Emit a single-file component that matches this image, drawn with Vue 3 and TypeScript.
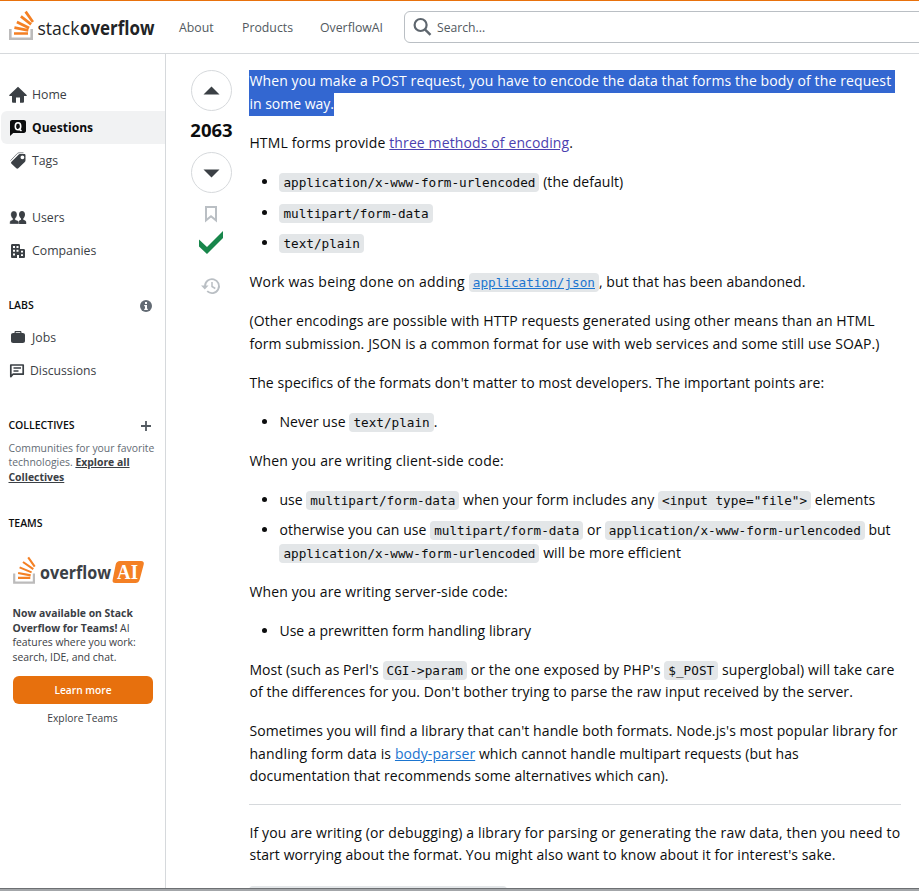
<script setup lang="ts">
type Kind = 'code' | 'link' | 'visited' | 'codelink' | 'selected'
interface Seg { t: string; ls: number; k?: Kind }
type Line = Seg[]
interface Block { type: 'p' | 'ul' | 'hr'; items?: Line[][] }

// s: text run with its tracking in px; c: inline code
const s = (t: string, ls = 0, k?: Kind): Seg => ({ t, ls, k })
const c = (t: string): Seg => ({ t, ls: 0, k: 'code' })

const blocks: Block[] = [
  { type: 'p', items: [[
    [s('When you make a POST request, you have to encode the data that forms the body of the request ', 0.122, 'selected')],
    [s('in some way.', 0, 'selected')],
  ]] },
  { type: 'p', items: [[[s('HTML forms provide ', 0.15), s('three methods of encoding', 0.12, 'visited'), s('.')]]] },
  { type: 'ul', items: [
    [[c('application/x-www-form-urlencoded'), s(' (the default)', 0.06)]],
    [[c('multipart/form-data')]],
    [[c('text/plain')]],
  ] },
  { type: 'p', items: [[[s('Work was being done on adding ', 0.22), s('application/json', 0, 'codelink'), s(', but that has been abandoned.', 0.06)]]] },
  { type: 'p', items: [[
    [s('(Other encodings are possible with HTTP requests generated using other means than an HTML', 0.108)],
    [s('form submission. JSON is a common format for use with web services and some still use SOAP.)', 0.104)],
  ]] },
  { type: 'p', items: [[[s("The specifics of the formats don't matter to most developers. The important points are:", 0.08)]]] },
  { type: 'ul', items: [[[s('Never use ', 0.06), c('text/plain'), s('.')]]] },
  { type: 'p', items: [[[s('When you are writing client-side code:', 0.17)]]] },
  { type: 'ul', items: [
    [[s('use '), c('multipart/form-data'), s(' when your form includes any ', 0.07), c('<input type="file">'), s(' elements')]],
    [
      [s('otherwise you can use ', 0.07), c('multipart/form-data'), s(' or '), c('application/x-www-form-urlencoded'), s(' but')],
      [c('application/x-www-form-urlencoded'), s(' will be more efficient', 0.07)],
    ],
  ] },
  { type: 'p', items: [[[s('When you are writing server-side code:', 0.13)]]] },
  { type: 'ul', items: [[[s('Use a prewritten form handling library', 0.05)]]] },
  { type: 'p', items: [[
    [s("Most (such as Perl's ", 0.07), c('CGI->param'), s(" or the one exposed by PHP's ", 0.13), c('$_POST'), s(' superglobal) will take care', 0.12)],
    [s("of the differences for you. Don't bother trying to parse the raw input received by the server.", 0.084)],
  ]] },
  { type: 'p', items: [[
    [s("Sometimes you will find a library that can't handle both formats. Node.js's most popular library for", 0.082)],
    [s('handling form data is ', 0.14), s('body-parser', 0.08, 'link'), s(' which cannot handle multipart requests (but has', 0.06)],
    [s('documentation that recommends some alternatives which can).', 0.055)],
  ]] },
  { type: 'hr' },
  { type: 'p', items: [[
    [s('If you are writing (or debugging) a library for parsing or generating the raw data, then you need to', 0.156)],
    [s("start worrying about the format. You might also want to know about it for interest's sake.", 0.08)],
  ]] },
]
</script>

<template>
  <div class="page">
    <header class="topbar">
      <svg class="logo" width="148" height="34" viewBox="0 0 148 34">
        <path d="M1.3 19v9.700h21.400V19" fill="none" stroke="#bcbbbb" stroke-width="2.600" />
        <path d="M5 23.500h14M5.400 17.600l13.900 2.800M7.900 12l12.200 6M11.900 6.400l10.200 8M16.600 1.600l7.300 10.400" stroke="#f48024" stroke-width="2.700" />
        <text class="wm light" x="28.500" y="25" textLength="42" lengthAdjust="spacingAndGlyphs">stack</text>
        <text class="wm heavy" transform="translate(71 25) scale(.89 1)" textLength="83.700" lengthAdjust="spacingAndGlyphs">overflow</text>
      </svg>
      <nav class="topnav">
        <a class="n1">About</a><a class="n2">Products</a><a class="n3">OverflowAI</a>
      </nav>
      <div class="search">
        <svg width="20" height="20" viewBox="0 0 20 20"><circle cx="7.600" cy="8" r="6" fill="none" stroke="#5e666e" stroke-width="2.200" /><path d="M11.900 12.300l5.600 5.600" stroke="#5e666e" stroke-width="2.400" /></svg>
        <span>Search...</span>
      </div>
    </header>

    <div class="body">
      <aside class="side">
        <div class="item">
          <svg width="18" height="18" viewBox="0 0 18 18"><path d="M9 .8l8.700 8.300v.8H15v5.600c0 .8-.5 1.300-1.300 1.300H11v-5.400H7v5.400H4.300c-.8 0-1.300-.5-1.300-1.300V9.900H.3v-.8z" fill="#3b4045" /></svg>
          <span>Home</span>
        </div>
        <div class="item active">
          <svg width="18" height="18" viewBox="0 0 18 18"><path d="M1 3.200C1 1.900 1.900 1 3.200 1h11.600C16.100 1 17 1.900 17 3.200v8.600c0 1.300-.9 2.200-2.200 2.200H4.200L1 17z" fill="#0c0d0e" /><path d="M11.700 7.200c0 2.300-1.100 3.600-2.700 3.600S6.300 9.500 6.300 7.200 7.400 3.700 9 3.700s2.700 1.200 2.700 3.500zM9.700 9.800l2.800 2" fill="none" stroke="#fff" stroke-width="1.600" /></svg>
          <span>Questions</span>
        </div>
        <div class="item">
          <svg width="18" height="18" viewBox="0 0 18 18"><path d="M10.800 2H15.200c.8 0 1.300.5 1.300 1.300v5c0 .7-.2 1.200-.7 1.700l-6.500 6.300c-.6.6-1.400.6-2 0L2.500 11.700c-.6-.6-.6-1.400 0-2l7-7c.4-.5.8-.7 1.300-.7zm2.600 5.200a1.900 1.900 0 1 0 0-3.800 1.900 1.900 0 0 0 0 3.800z" fill="#3b4045" fill-rule="evenodd" /><path d="M1.500 8.600L8.300 1.500C8.800 1 9.300.8 10 .8h4.500" fill="none" stroke="#85898d" stroke-width="1" /></svg>
          <span>Tags</span>
        </div>
        <div class="item gap">
          <svg width="18" height="18" viewBox="0 0 18 18"><path d="M9.500 15V13c0-1 .8-1.500 2.500-2.300V9.500C11 8.700 10 7.200 10 5.600 10 3.300 11.200 2 13 2s3 1.300 3 3.600c0 1.600-.7 3.100-1.700 3.900v1.200c2 .8 2.900 1.300 2.900 2.300v2z" fill="#3b4045" /><path d="M.8 15v-2c0-1 .9-1.500 2.900-2.300V9.500C2.600 8.700 1.800 7.200 1.800 5.600 1.800 3.300 3 2 4.900 2s3.100 1.300 3.100 3.600c0 1.600-.7 3.100-1.800 3.900v1.200c2.100.8 3.600 1.300 3.600 2.300v2z" fill="#3b4045" stroke="#fff" stroke-width=".3" /></svg>
          <span>Users</span>
        </div>
        <div class="item">
          <svg width="18" height="18" viewBox="0 0 18 18"><path d="M3.500 2h6C10.500 2 11 2.500 11 3.500V7h3.500c1 0 1.500.5 1.500 1.500v6c0 1-.5 1.500-1.500 1.500H10v-3H8v3H3.500C2.500 16 2 15.500 2 14.500v-11C2 2.500 2.500 2 3.500 2zM4 4v2h2V4zm3.500 0v2h2V4zM4 7.800v2h2v-2zm3.500 0v2h2v-2zM4 11.600v2h2v-2zm8-2.800v1.700h2V8.800zm0 3.500V14h2v-1.700z" fill="#3b4045" fill-rule="evenodd" /></svg>
          <span>Companies</span>
        </div>

        <div class="head labs"><span>LABS</span>
          <svg width="12" height="12" viewBox="0 0 12 12"><circle cx="6" cy="6" r="6" fill="#636b74" /><path d="M5 2h2v2H5zM4.200 5H7v3.800h.8V10H4.200V8.800H5V6.200h-.8z" fill="#fff" /></svg>
        </div>
        <div class="item after">
          <svg width="18" height="18" viewBox="0 0 18 18"><path d="M5.500 4V3.300C5.500 2.500 6 2 6.800 2h4.400c.8 0 1.300.5 1.300 1.300V4h1.300C15.200 4 16 4.800 16 6.200v5.600c0 1.400-.8 2.200-2.200 2.200H4.200C2.800 14 2 13.200 2 11.800V6.200C2 4.800 2.800 4 4.200 4zm1.200 0h4.600v-.8H6.700z" fill="#3b4045" fill-rule="evenodd" /></svg>
          <span>Jobs</span>
        </div>
        <div class="item disc">
          <svg width="18" height="18" viewBox="0 0 18 18"><path d="M1.800 3h12.400v9.200H4L1.800 14.600z" fill="none" stroke="#3b4045" stroke-width="1.700" stroke-linejoin="round" /><path d="M4.500 6h7.500M4.500 9h5" stroke="#3b4045" stroke-width="1.500" /></svg>
          <span>Discussions</span>
        </div>

        <div class="head coll"><span>COLLECTIVES</span>
          <svg width="12" height="12" viewBox="0 0 12 12"><path d="M6 1v10M1 6h10" stroke="#525960" stroke-width="1.800" /></svg>
        </div>
        <p class="blurb">Communities for your favorite<br><i>technologies.</i> <b>Explore all</b><br><b>Collectives</b></p>

        <div class="head teams"><span>TEAMS</span></div>
        <svg class="ailogo" width="132" height="30" viewBox="0 0 132 30">
          <path d="M1.200 17.500v9.200h19.700v-9.200" fill="none" stroke="#bcbbbb" stroke-width="2.200" />
          <path d="M5 21.900h12.300M5.100 17l12.600 2.400M6.600 11.400l12 5M10 6l10.300 7.200M15.200 1.300l6.500 9.400" stroke="#f48024" stroke-width="2.100" />
          <text class="aiword" transform="translate(27 22.800) scale(.92 1)" textLength="77.200" lengthAdjust="spacingAndGlyphs">overflow</text>
          <path d="M107 5h21c2.300 0 3.300 1.400 2.700 3.600l-4 14.800c-.7 2.300-2 3.600-4.300 3.600h-20c-2.300 0-3.300-1.400-2.700-3.600l3-14.800C103.300 6.300 104.700 5 107 5z" fill="#f48024" />
          <text class="aiai" x="104" y="22.700" textLength="21" lengthAdjust="spacingAndGlyphs">AI</text>
        </svg>
        <p class="promo"><b>Now available on Stack</b><br><b>Overflow for Teams!</b> AI<br>features where you work:<br>search, IDE, and chat.</p>
        <button class="learn">Learn more</button>
        <a class="explore">Explore Teams</a>
      </aside>

      <main class="main">
        <div class="votes">
          <div class="circle"><svg width="18" height="18" viewBox="0 0 18 18"><path d="M.5 12.500h16l-8-8z" fill="#3b4045" /></svg></div>
          <div class="score">2063</div>
          <div class="circle"><svg width="18" height="18" viewBox="0 0 18 18"><path d="M.5 5.500h16l-8 8z" fill="#3b4045" /></svg></div>
          <svg class="mark" width="14" height="18" viewBox="0 0 14 18"><path d="M2 2h10v13.300l-5-4-5 4z" fill="none" stroke="#babfc4" stroke-width="2" /></svg>
          <svg class="check" width="26" height="26" viewBox="0 0 26 26"><path d="M1 9.500l8 7.500L25 1v7L9 24 1 16.500z" fill="#18864b" /></svg>
          <svg class="hist" width="20" height="18" viewBox="0 0 20 18"><path d="M4 9a7 7 0 1 1 2.200 5.200" fill="none" stroke="#babfc4" stroke-width="1.800" /><path d="M0 8.500h7.500L3.800 12.500z" fill="#babfc4" /><path d="M11 5v4.500l3.300 2" fill="none" stroke="#babfc4" stroke-width="1.500" /></svg>
        </div>
        <article class="prose">
          <template v-for="(b, bi) in blocks" :key="bi">
            <hr v-if="b.type === 'hr'">
            <component :is="b.type" v-else>
              <component :is="b.type === 'ul' ? 'li' : 'span'" v-for="(item, ii) in b.items" :key="ii" class="entry">
                <span v-for="(line, li) in item" :key="li" class="line"><span v-for="(g, gi) in line" :key="gi" :class="g.k" :style="{ letterSpacing: g.ls + 'px' }">{{ g.t }}</span></span>
              </component>
            </component>
          </template>
          <div class="pre"></div>
        </article>
      </main>
    </div>
    <div class="bottom"></div>
  </div>
</template>

<style>
body { margin: 0; overflow: hidden; background: #fff; }
</style>

<style scoped>
* { box-sizing: border-box; }
.page { width: 919px; height: 891px; overflow: hidden; display: flex; flex-direction: column; font-family: "Open Sans", "Noto Sans", sans-serif; color: #0c0d0e; background: #fff; }
.topbar { height: 54px; flex: none; border-top: 1px solid #e8710c; border-bottom: 1px solid #d6d9dc; display: flex; }
.logo { margin: 9px 0 0 9px; flex: none; display: block; }
.wm { font-size: 19px; fill: #222426; }
.light { font-weight: 400; }
.heavy { font-weight: 700; }
.topnav { display: flex; width: 247px; flex: none; padding-left: 22px; font-size: 12.300px; color: #525960; line-height: 53px; }
.n1 { width: 63px; }
.n2 { width: 78px; }
.search { margin: 10px -10px 0 0; height: 32px; flex: 1; border: 1px solid #babfc4; border-radius: 6px; display: flex; align-items: center; padding-left: 8px; gap: 4px; font-size: 12.200px; color: #525960; }
.body { display: flex; flex: 1; min-height: 0; }
.side { width: 166px; flex: none; border-right: 1px solid #d6d9dc; padding-top: 24px; }
.item { height: 33px; display: flex; align-items: center; padding-left: 9px; gap: 5px; font-size: 12.300px; color: #3b4045; }
.item.active { background: #f1f2f3; margin-left: 1px; padding-left: 8px; border-radius: 6px 0 0 6px; color: #0c0d0e; font-weight: 700; font-size: 12.100px; }
.item.gap { margin-top: 24px; }
.item.disc { gap: 3px; font-size: 12.200px; }
.head { display: flex; justify-content: space-between; align-items: center; font-size: 10.500px; font-weight: 600; padding: 0 13px 0 8.400px; height: 16px; color: #0c0d0e; }
.head svg { position: relative; top: 1px; }
.labs { margin-top: 30px; }
.after { margin-top: 8px; }
.coll { margin-top: 30.400px; }
.blurb { margin: 7.200px 0 0 8.500px; font-size: 10.400px; line-height: 14.500px; color: #636b74; white-space: nowrap; }
.blurb i { font-style: normal; }
.blurb b { color: #3b4045; text-decoration: underline; }
.teams { margin-top: 31.400px; }
.ailogo { display: block; margin: 25px 0 0 13px; }
.aiword { font-size: 17.500px; font-weight: 700; fill: #3b4045; }
.aiai { font-family: "Liberation Serif", serif; font-size: 21px; font-weight: 700; fill: #fff; }
.promo { margin: 20px 0 0 12.500px; font-size: 10.400px; line-height: 14.500px; color: #3b4045; white-space: nowrap; }
.learn { display: block; margin: 12px 0 0 13px; width: 140px; height: 28px; border: 0; border-radius: 6px; background: #e7700d; color: #fff; font: 600 10.200px "Open Sans", sans-serif; padding: 0; }
.explore { display: block; width: 139px; margin: 6px 0 0 13px; text-align: center; font-size: 10.300px; line-height: 16px; color: #3b4045; }
.main { flex: 1; min-width: 0; display: flex; padding: 16px 18px 0 25px; }
.votes { width: 41px; flex: none; display: flex; flex-direction: column; align-items: center; }
.circle { width: 41px; height: 41px; flex: none; border: 1px solid #d6d9dc; border-radius: 50%; display: flex; align-items: center; justify-content: center; }
.score { height: 41px; line-height: 37px; font-size: 18.500px; font-weight: 700; }
.mark { margin: 12px 1px 0 0; }
.check { margin: 7px 1px 0 0; }
.hist { margin: 21px 1px 0 0; }
.prose { margin-left: 17.400px; width: 652px; flex: none; font-size: 14px; line-height: 22.500px; }
.prose p, .prose ul { margin: 0 0 16.500px; padding: 0; }
.prose p:first-child { margin-bottom: 17.400px; }
.prose ul { padding-left: 30px; }
.prose .entry { display: block; }
.prose li.entry { display: list-item; margin-bottom: 8px; }
.prose li.entry:last-child { margin-bottom: 0; }
.line { display: block; white-space: pre; height: 22.500px; }
.selected { display: inline-block; height: 23px; background: #3367d1; color: #fff; }
.code, .codelink { font-family: "DejaVu Sans Mono", monospace; font-size: 12.690px; line-height: 1; background: #e3e6e8; border-radius: 4px; padding: 2px 4px; }
.codelink { color: #1b75d0; text-decoration: underline; }
.link { color: #1b75d0; text-decoration: underline; }
.visited { color: #4b3fb0; text-decoration: underline; }
.prose hr { height: 1px; border: 0; background: #d6d9dc; margin: 0 0 16.500px; }
.pre { height: 40px; width: 258px; margin-top: 19px; background: #e3e6e8; border-radius: 4px; }
.bottom { height: 3px; flex: none; background: #a3a6a9; border-top: 1px solid #6d7073; }
</style>
